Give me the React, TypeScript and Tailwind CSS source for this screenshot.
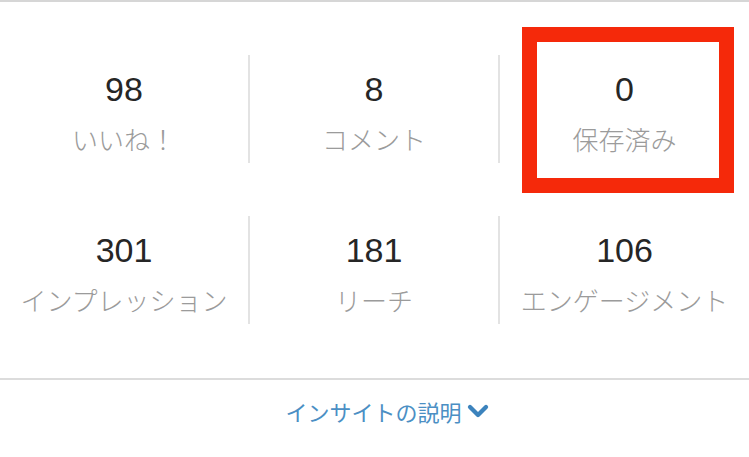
import { ChevronDown } from "lucide-react";

const ROWS = [
  [
    { value: "98", label: "いいね！" },
    { value: "8", label: "コメント" },
    { value: "0", label: "保存済み" },
  ],
  [
    { value: "301", label: "インプレッション" },
    { value: "181", label: "リーチ" },
    { value: "106", label: "エンゲージメント" },
  ],
];

const Stat = ({ value, label, divider }: { value: string; label: string; divider: boolean }) => (
  <div className={`flex h-[108px] flex-col items-center pt-[14px] ${divider ? "border-l-2 border-[#e3e3e3]" : ""}`}>
    <span className="text-[34px] leading-[40px] text-[#262626]" style={{ fontFamily: '"Liberation Sans", Arial, sans-serif' }}>
      {value}
    </span>
    <span className="mt-[15px] text-[26px] leading-[30px] font-light whitespace-nowrap text-[#9b9b9b]">{label}</span>
  </div>
);

export default function App() {
  return (
    <div
      className="relative h-[457px] w-[749px] overflow-hidden bg-white"
      style={{ fontFamily: '"Noto Sans CJK JP", "Noto Sans", sans-serif' }}
    >
      <div className="h-[2px] bg-[#d6d6d6]" />

      <div className="flex flex-col gap-[53px] pt-[53px]">
        {ROWS.map((row, i) => (
          <div key={i} className="grid grid-cols-[248px_250px_251px]">
            {row.map((s, j) => (
              <Stat key={s.label} value={s.value} label={s.label} divider={j > 0} />
            ))}
          </div>
        ))}
      </div>

      <div className="mt-[54px] h-[2px] bg-[#dcdcdc]" />
      <div className="flex h-[64px] items-center justify-center pl-[30px] pb-[2px]">
        <span className="text-[22px] leading-none text-[#4b8fc4]">インサイトの説明</span>
        <ChevronDown className="h-8 w-8 text-[#3c83bd]" strokeWidth={3.2} />
      </div>

      {/* red highlight box */}
      <div className="absolute left-[522px] top-[27px] h-[166px] w-[212px] border-[15px] border-[#f5290a]" />
    </div>
  );
}
